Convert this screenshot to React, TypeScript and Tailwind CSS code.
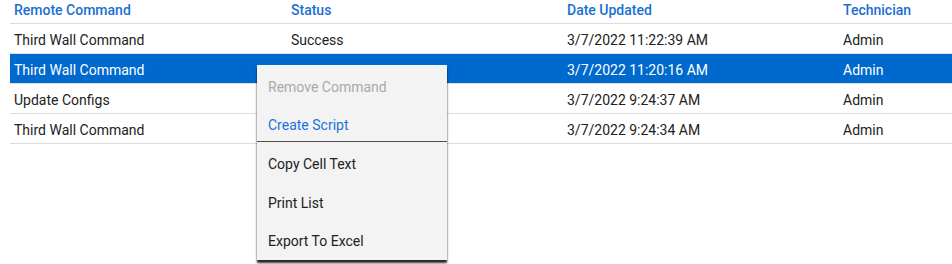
import { Fragment } from 'react'

type Row = { command: string; status: string; updated: string; tech: string; selected?: boolean }

const ROWS: Row[] = [
  { command: 'Third Wall Command', status: 'Success', updated: '3/7/2022 11:22:39 AM', tech: 'Admin' },
  { command: 'Third Wall Command', status: '', updated: '3/7/2022 11:20:16 AM', tech: 'Admin', selected: true },
  { command: 'Update Configs', status: '', updated: '3/7/2022 9:24:37 AM', tech: 'Admin' },
  { command: 'Third Wall Command', status: '', updated: '3/7/2022 9:24:34 AM', tech: 'Admin' },
]

const HEADERS = ['Remote Command', 'Status', 'Date Updated', 'Technician']

const MENU = [
  { label: 'Remove Command', tone: 'disabled', h: 'h-[38px]' },
  { label: 'Create Script', tone: 'link', h: 'h-[38px]', divider: true },
  { label: 'Copy Cell Text', h: 'h-[39px]' },
  { label: 'Print List', h: 'h-[38px]' },
  { label: 'Export To Excel', h: 'h-[39px]' },
]

export default function App() {
  return (
    <div className="relative h-[264px] w-[952px] overflow-hidden bg-white pl-[10px] font-['Roboto',sans-serif] text-[14px]">
      {/* Grid */}
      <div className="grid grid-cols-[277px_276px_276px_1fr]">
        {HEADERS.map(h => (
          <div key={h} className="flex h-[24px] items-center border-b border-[#dcdcdc] pl-[4px] pb-[2px] font-medium text-[#1a6fd1]">
            {h}
          </div>
        ))}
        {ROWS.map((r, i) => (
          <Fragment key={i}>
            {[r.command, r.status, r.updated, r.tech].map((cell, j) => (
              <div
                key={j}
                className={`flex h-[30px] items-center border-b pl-[4px] pt-[3px] ${
                  r.selected ? 'border-[#dcdcdc] bg-[#0069cd] text-white' : 'border-[#dcdcdc] text-[#222]'
                }`}
              >
                {cell}
              </div>
            ))}
          </Fragment>
        ))}
      </div>

      {/* Context menu */}
      <div className="absolute left-[257px] top-[65px] w-[190px] bg-[#f3f3f3] pb-[2px] shadow-[0_3px_2px_rgba(0,0,0,0.85)]">
        {MENU.map(m => (
          <div key={m.label}>
            <div
              className={`flex ${m.h} items-center pl-[11px] pt-[6px] ${
                m.tone === 'disabled' ? 'text-[#a9a9a9]' : m.tone === 'link' ? 'text-[#1a73d6]' : 'text-[#222]'
              }`}
            >
              {m.label}
            </div>
            {m.divider && <div className="h-px bg-[#505050]" />}
          </div>
        ))}
      </div>
    </div>
  )
}
